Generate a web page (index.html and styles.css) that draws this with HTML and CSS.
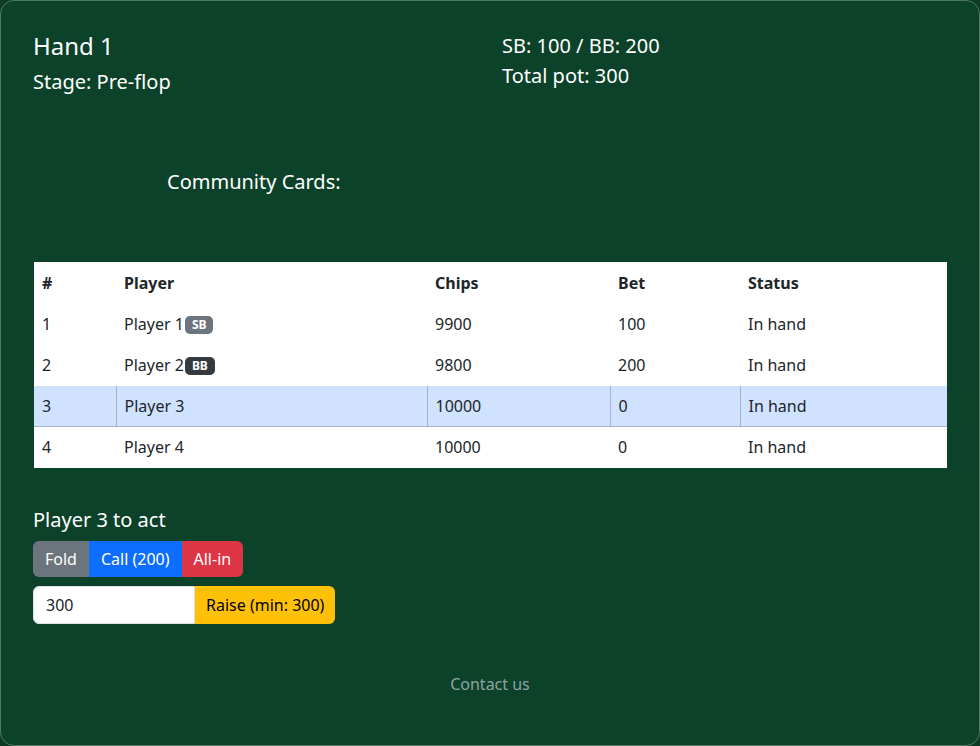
FILE: index.html
```html
<!DOCTYPE html>
<html lang="en">
<head>
  <meta charset="UTF-8">
  <meta name="viewport" content="width=device-width, initial-scale=1.0">
  <title>Poker Table</title>
  <link rel="stylesheet" href="styles.css">
</head>
<body>
  <div class="card">
    <div class="info-row">
      <div class="info-col">
        <h2 class="hand-title">Hand 1</h2>
        <div class="info-line">Stage: Pre-flop</div>
      </div>
      <div class="info-col blinds">
        <div class="info-line">SB: 100 / BB: 200</div>
        <div class="info-line">Total pot: 300</div>
      </div>
    </div>

    <div class="community">
      <div class="info-line">Community Cards:</div>
      <div class="cards"></div>
    </div>

    <table class="players">
      <thead>
        <tr>
          <th class="c-num">#</th>
          <th class="c-player">Player</th>
          <th class="c-chips">Chips</th>
          <th class="c-bet">Bet</th>
          <th>Status</th>
        </tr>
      </thead>
      <tbody>
        <tr>
          <td>1</td>
          <td>Player 1<span class="badge badge-sb">SB</span></td>
          <td>9900</td>
          <td>100</td>
          <td>In hand</td>
        </tr>
        <tr>
          <td>2</td>
          <td>Player 2<span class="badge badge-bb">BB</span></td>
          <td>9800</td>
          <td>200</td>
          <td>In hand</td>
        </tr>
        <tr class="active">
          <td>3</td>
          <td>Player 3</td>
          <td>10000</td>
          <td>0</td>
          <td>In hand</td>
        </tr>
        <tr>
          <td>4</td>
          <td>Player 4</td>
          <td>10000</td>
          <td>0</td>
          <td>In hand</td>
        </tr>
      </tbody>
    </table>

    <div class="actions">
      <div class="info-line">Player 3 to act</div>
      <div class="btn-group">
        <button class="btn btn-fold">Fold</button>
        <button class="btn btn-call">Call (200)</button>
        <button class="btn btn-allin">All-in</button>
      </div>
      <div class="raise-group">
        <input type="number" class="raise-input" value="300">
        <button class="btn btn-raise">Raise (min: 300)</button>
      </div>
    </div>

    <footer class="footer">Contact us</footer>
  </div>
</body>
</html>
```

FILE: styles.css
```css
body {
  margin: 0;
  background: #0d3b25;
  font-family: 'Noto Sans', 'Open Sans', sans-serif;
  color: #fff;
}
.card {
  box-sizing: border-box;
  min-height: 100vh;
  background: #0c4229;
  border: 1px solid #4d7a62;
  border-radius: 14px;
  padding: 31px 32px 40px;
}
.info-row {
  display: grid;
  grid-template-columns: 1fr 1fr;
  gap: 24px;
}
.hand-title {
  margin: 0 0 6px;
  font-size: 24px;
  font-weight: 400;
  line-height: 1.2;
}
.info-line {
  font-size: 20px;
  line-height: 30px;
}
.blinds {
  margin-top: -1px;
}
.community {
  margin-top: 70px;
  padding-left: 134px;
}
.cards {
  height: 65px;
}
.players {
  width: calc(100% - 1px);
  margin-left: 1px;
  border-collapse: collapse;
  background: #fff;
  color: #212529;
  font-size: 16px;
}
.players th,
.players td {
  text-align: left;
  padding: 8px;
  line-height: 24px;
  border-bottom: 1px solid #fff;
}
.players th {
  padding-top: 9px;
  font-weight: 700;
}
.c-num { width: 66px; }
.c-player { width: 295px; }
.c-chips { width: 167px; }
.c-bet { width: 114px; }
.players tr.active td {
  background: #cfe2ff;
  border: 1px solid #a6b5cc;
}
.players tr.active td:first-child { border-left: none; }
.players tr.active td:last-child { border-right: none; }
.badge {
  display: inline-block;
  margin-left: 1px;
  padding: 3px 7px;
  font-size: 12px;
  font-weight: 700;
  line-height: 12px;
  color: #fff;
  border-radius: 5px;
  vertical-align: 1px;
}
.badge-sb { background: #6c757d; }
.badge-bb { background: #343a40; }
.actions {
  margin-top: 37px;
}
.btn-group {
  display: flex;
  margin-top: 6px;
}
.btn {
  font-family: inherit;
  font-size: 16px;
  line-height: 24px;
  padding: 5px 11px;
  border: 1px solid transparent;
  color: #fff;
  cursor: pointer;
}
.btn-group .btn { border-radius: 0; }
.btn-group .btn:first-child { border-radius: 6px 0 0 6px; }
.btn-group .btn:last-child { border-radius: 0 6px 6px 0; }
.btn-fold { background: #6c757d; }
.btn-call { background: #0d6efd; }
.btn-allin { background: #dc3545; }
.raise-group {
  display: flex;
  margin-top: 9px;
}
.raise-input {
  box-sizing: border-box;
  width: 162px;
  font-family: inherit;
  font-size: 16px;
  line-height: 24px;
  padding: 6px 12px;
  border: 1px solid #dee2e6;
  border-radius: 6px 0 0 6px;
  color: #212529;
  -moz-appearance: textfield;
}
.raise-input::-webkit-inner-spin-button { -webkit-appearance: none; }
.btn-raise {
  background: #ffc107;
  color: #000;
  padding: 6px 10px;
  border-radius: 0 6px 6px 0;
}
.footer {
  margin-top: 48px;
  text-align: center;
  color: #8fa3a0;
  font-size: 16px;
  line-height: 24px;
}
```
